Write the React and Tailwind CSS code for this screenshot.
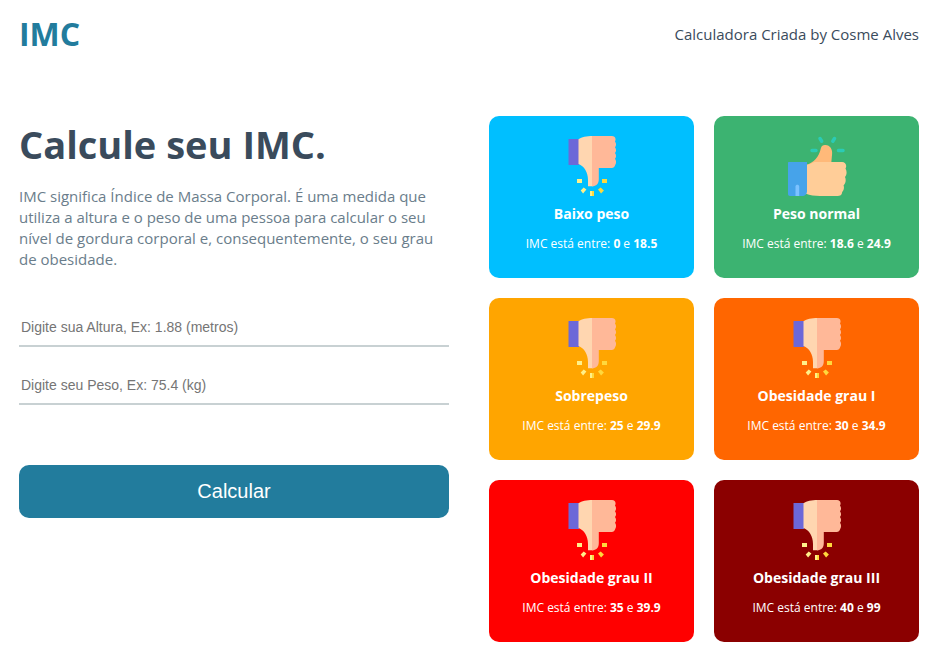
import { useState } from "react";

const levels = [
  { title: "Baixo peso", min: "0", max: "18.5", color: "bg-[#00bfff]", good: false },
  { title: "Peso normal", min: "18.6", max: "24.9", color: "bg-[#3cb371]", good: true },
  { title: "Sobrepeso", min: "25", max: "29.9", color: "bg-[#ffa500]", good: false },
  { title: "Obesidade grau I", min: "30", max: "34.9", color: "bg-[#ff6600]", good: false },
  { title: "Obesidade grau II", min: "35", max: "39.9", color: "bg-[#ff0000]", good: false },
  { title: "Obesidade grau III", min: "40", max: "99", color: "bg-[#8b0000]", good: false },
];

function ThumbDown() {
  return (
    <svg viewBox="0 0 60 60" className="size-[60px]" aria-hidden="true">
      <path d="M6.500 3H17v26H6.500z" fill="#6c68d8" />
      <path d="M16.500 3.200C20 1 24 0 31 0v50.300h-5V44c0-8-4-14-9.500-16z" fill="#ffd6b0" />
      <path
        d="M30 0H50c3 0 4.500 3 3 5.400 1.400 2 1.400 4.200 0 5.800 1.400 2 1.400 4.200 0 5.800 1.400 2 1.400 4.200 0 5.800 1.400 2 1.400 4.200.2 6.200-.6 2-1.700 3-3.400 3H36.800V43c0 5-2.500 7.300-6.800 7.300z"
        fill="#ffb898"
      />
      <path d="M15 43h5v4h-5z" fill="#fff08a" />
      <path d="M40 43h5v4h-5z" fill="#ffd83d" />
      <path d="M18.700 54.500l3-3 2.700 2-3.300 4z" fill="#fff08a" />
      <path d="M36 53.500l2.700-2 3.200 3-2.800 3z" fill="#ffd83d" />
      <path d="M28 55h2v5h-2z" fill="#fff08a" />
      <path d="M30 55h2v5h-2z" fill="#ffd83d" />
    </svg>
  );
}

function ThumbUp() {
  return (
    <svg viewBox="0 0 60 60" className="size-[60px]" aria-hidden="true">
      <path d="M19 29c8-2.500 13-8 14.800-16.500.8-3 2.500-3.700 4.700-3.500 4.500.3 7.200 4.300 6.600 9L44 30 27 34z" fill="#ffb979" />
      <path
        d="M19 29c3.500-.6 6-2 8.500-3H55c3.500 0 5.300 3.500 3.500 6.500 1.700 3 1.300 6-.5 8.500 1.300 3 .7 6-1.400 8.300.8 2.700.2 5-1.400 6.700C55 59 53 60 50.500 60H33c-5.500 0-10-.7-14-2.200z"
        fill="#ffcd98"
      />
      <path d="M1 27c0-.6.400-1 1-1h18v29c0 3-2 5-5 5H3c-1.200 0-2-.8-2-2z" fill="#46a3ea" />
      <path d="M8.500 60V50.500c0-2.300 3.700-2.300 3.700 0V60z" fill="#7cc2ff" />
      <path
        d="M25 14.500h4M51.500 14.500h4.500M33 2.500l1.700 2.700M47.500 2.500l-1.700 2.700"
        fill="none"
        stroke="#2bcbb5"
        strokeWidth="3.500"
        strokeLinecap="round"
      />
    </svg>
  );
}

function LevelCard({ level }) {
  return (
    <article className={`flex flex-col items-center rounded-[10px] px-2 py-5 text-white ${level.color}`}>
      {level.good ? <ThumbUp /> : <ThumbDown />}
      <h2 className="mt-2 text-[14px] leading-5 font-bold">{level.title}</h2>
      <p className="mt-3 mb-1.5 text-[12px] leading-4">
        IMC está entre: <strong>{level.min}</strong> e <strong>{level.max}</strong>
      </p>
    </article>
  );
}

export default function App() {
  const [height, setHeight] = useState("");
  const [weight, setWeight] = useState("");
  const field =
    "h-10 w-full border-b-2 border-[#c8d1d3] bg-transparent px-0.5 pt-0.5 font-['Liberation_Sans',Arial,sans-serif] text-[14px] text-[#3a4b5c] outline-none placeholder:text-[#757575]";

  return (
    <div className="bg-white pr-8 pb-5 pl-[19px] font-['Open_Sans','Noto_Sans',sans-serif]">
      <header className="flex h-[68px] items-center justify-between">
        <a href="#" className="text-[32px] leading-10 font-bold text-[#227c9d]">IMC</a>
        <p className="text-[15px] text-[#3a4b5c]">Calculadora Criada by Cosme Alves</p>
      </header>

      <main className="mt-12 grid grid-cols-2 items-start gap-10">
        <section>
          <h1 className="text-[38px] leading-[56px] font-bold text-[#3a4b5c]">Calcule seu IMC.</h1>
          <p className="mt-3.5 text-[15px] leading-[21px] text-[#6a7d8b]">
            IMC significa Índice de Massa Corporal. É uma medida que utiliza a altura e o peso de uma
            pessoa para calcular o seu nível de gordura corporal e, consequentemente, o seu grau de
            obesidade.
          </p>
          <form className="mt-[37px]" onSubmit={(e) => e.preventDefault()}>
            <div className="flex flex-col gap-[18px]">
              <input
                aria-label="Altura em metros"
                className={field}
                placeholder="Digite sua Altura, Ex: 1.88 (metros)"
                value={height}
                onChange={(e) => setHeight(e.target.value)}
              />
              <input
                aria-label="Peso em kg"
                className={field}
                placeholder="Digite seu Peso, Ex: 75.4 (kg)"
                value={weight}
                onChange={(e) => setWeight(e.target.value)}
              />
            </div>
            <button
              type="submit"
              className="mt-[60px] w-full cursor-pointer rounded-[10px] bg-[#227c9d] py-3 font-['Liberation_Sans',Arial,sans-serif] text-[20px] leading-[29px] text-white"
            >
              Calcular
            </button>
          </form>
        </section>

        <section aria-label="Faixas de IMC" className="grid grid-cols-2 gap-5">
          {levels.map((level) => (
            <LevelCard key={level.title} level={level} />
          ))}
        </section>
      </main>
    </div>
  );
}
